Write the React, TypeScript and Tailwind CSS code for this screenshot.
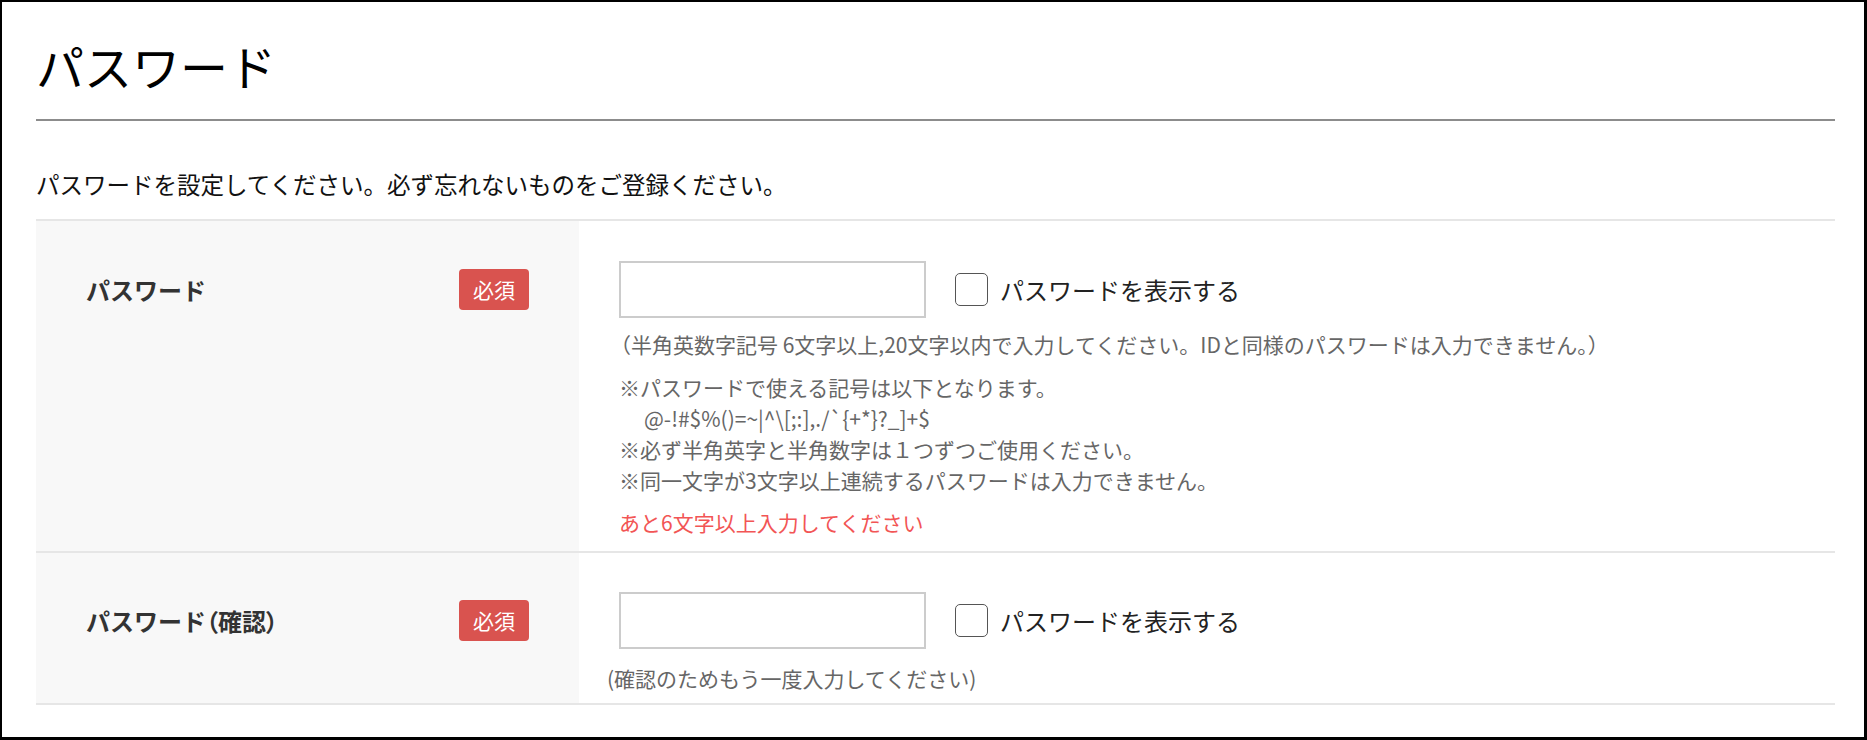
import React from 'react';

const symbols = '@-!#$%()=~|^\\[;:],./`{+*}?_]+$';

function Badge() {
  return (
    <span className="flex h-[41px] w-[70px] items-center justify-center rounded-[4px] bg-[#d9534f] text-[21px] text-white">
      必須
    </span>
  );
}

function ShowPassword() {
  return (
    <label className="ml-[29px] flex items-center gap-[12px] text-[24px] text-[#222]">
      <span className="block h-[33px] w-[33px] rounded-[5px] border-[1.5px] border-[#555] bg-white" />
      パスワードを表示する
    </label>
  );
}

function Field() {
  return (
    <div className="flex items-center">
      <input type="password" className="h-[57px] w-[307px] border-2 border-[#cccccc] bg-white outline-none" />
      <ShowPassword />
    </div>
  );
}

export default function App() {
  return (
    <div className="h-[740px] w-[1867px] border-t-2 border-l-2 border-r-[3px] border-b-[3px] border-black bg-white pl-[34px] pr-[29px] font-['Noto_Sans_CJK_JP',sans-serif] text-[#111]">
      <h1 className="border-b-2 border-[#8c8c8c] pt-[27px] pb-[18px] text-[48px] font-normal leading-[72px] text-black">パスワード</h1>
      <p className="mt-[47px] text-[23.5px] leading-[33px]">パスワードを設定してください。必ず忘れないものをご登録ください。</p>

      <div className="mt-[18px] border-t-2 border-[#e6e6e6]">
        <div className="flex border-b-2 border-[#e6e6e6]">
          <div className="w-[543px] bg-[#f8f8f8] px-[50px] pt-[40px]">
            <div className="flex h-[57px] items-center justify-between">
              <span className="text-[24px] font-bold text-[#333]">パスワード</span>
              <Badge />
            </div>
          </div>
          <div className="flex-1 pt-[40px] pb-[13px] pl-[40px] text-[21px] text-[#666]">
            <Field />
            <p className="mt-[11px] -ml-[9px] leading-[31px]">（半角英数字記号 6文字以上,20文字以内で入力してください。IDと同様のパスワードは入力できません。）</p>
            <div className="mt-[12px] leading-[31px]">
              <p>※パスワードで使える記号は以下となります。</p>
              <p className="pl-[25px]">{symbols}</p>
              <p>※必ず半角英字と半角数字は１つずつご使用ください。</p>
              <p>※同一文字が3文字以上連続するパスワードは入力できません。</p>
            </div>
            <p className="mt-[11px] leading-[31px] text-[#f25555]">あと6文字以上入力してください</p>
          </div>
        </div>

        <div className="flex border-b-2 border-[#e6e6e6]">
          <div className="w-[543px] bg-[#f8f8f8] px-[50px] pt-[39px]">
            <div className="flex h-[57px] items-center justify-between">
              <span className="text-[24px] font-bold text-[#333]">
                パスワード<span className="[font-feature-settings:'palt']">（確認）</span>
              </span>
              <Badge />
            </div>
          </div>
          <div className="flex-1 pt-[39px] pb-[10px] pl-[40px] text-[21px] text-[#666]">
            <Field />
            <p className="mt-[14px] -ml-[12px] leading-[30px]">(確認のためもう一度入力してください)</p>
          </div>
        </div>
      </div>
    </div>
  );
}
